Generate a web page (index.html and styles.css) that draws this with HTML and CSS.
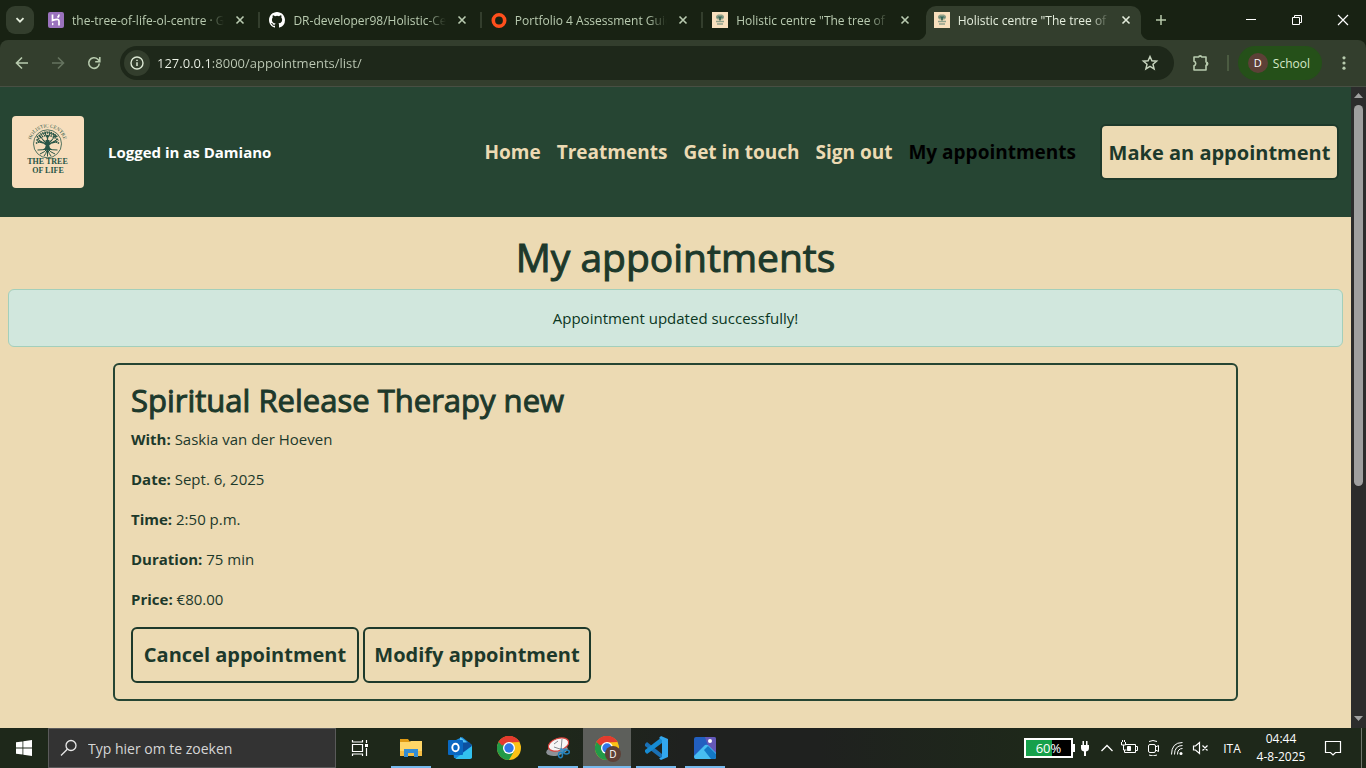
FILE: index.html
```html
<!DOCTYPE html>
<html lang="en">
<head>
<meta charset="utf-8">
<title>Holistic centre "The tree of life"</title>
<link rel="stylesheet" href="styles.css">
</head>
<body>
<svg class="defs" aria-hidden="true">
  <symbol id="x" viewBox="0 0 16 16"><path d="M4.500 4.500l7 7M11.500 4.500l-7 7" fill="none" stroke="currentColor" stroke-width="1.600"/></symbol>
  <symbol id="tree" viewBox="0 0 16 16"><rect width="16" height="16" fill="#f8dfbd"/><path d="M4 4l2-1.500h4l2 1.500v2l-1.500 1.500h-5L4 6z" fill="#8f9f86"/><path d="M6 4h4l1 2H5z" fill="#5d8070"/><path d="M7.200 5h1.600v3.500H7.200z" fill="#2d5b4b"/><path d="M4 9.500h8M5 12h6" stroke="#8fa08a" stroke-width="1.500"/></symbol>
  <symbol id="chrome" viewBox="0 0 24 24">
    <circle cx="12" cy="12" r="12" fill="#fbc116"/>
    <path d="M12 12L1.600 6A12 12 0 0 1 22.400 6H12z" fill="#e33b2e"/>
    <path d="M12 12L1.600 6A12 12 0 0 0 12 24l5.200-9z" fill="#229a48"/>
    <path d="M1.600 6L6.800 15 12 12V6z" fill="#229a48"/>
    <path d="M1.600 6L5 9.500 12 6.500 22.400 6A12 12 0 0 0 1.600 6z" fill="#e33b2e"/>
    <circle cx="12" cy="12" r="6" fill="#fff"/><circle cx="12" cy="12" r="4.700" fill="#2f76e8"/>
  </symbol>
</svg>

<div class="tabstrip">
  <button class="tab-search" aria-label="Search tabs"><svg viewBox="0 0 16 16" width="16" height="16"><path d="M4.500 6.200L8 9.700l3.500-3.500" fill="none" stroke="#e4eddc" stroke-width="1.800"/></svg></button>
  <div class="tabs">
    <div class="tab">
      <svg class="fav" viewBox="0 0 16 16"><rect width="16" height="16" rx="2" fill="#9a72bd"/><path d="M4.500 2.500V8.500Q11 6 11 9v4.500M11 2.500Q11 4.500 9.500 5.500" fill="none" stroke="#fff" stroke-width="1.700"/><path d="M4 10.500l2 1.500-2 1.500z" fill="#fff"/></svg>
      <span class="tab-title">the-tree-of-life-ol-centre · Git</span>
      <button class="tab-close" aria-label="Close"><svg><use href="#x"/></svg></button>
    </div>
    <div class="tab">
      <svg class="fav" viewBox="0 0 16 16"><path fill="#fff" d="M8 0C3.580 0 0 3.580 0 8c0 3.540 2.290 6.530 5.470 7.590.4.070.55-.17.55-.38 0-.19-.01-.82-.01-1.490-2.010.37-2.530-.49-2.690-.94-.09-.23-.48-.94-.82-1.130-.28-.15-.68-.52-.01-.53.63-.01 1.080.58 1.230.82.72 1.210 1.870.87 2.330.66.07-.52.28-.87.51-1.070-1.780-.2-3.640-.89-3.640-3.950 0-.87.31-1.590.82-2.150-.08-.2-.36-1.020.08-2.120 0 0 .67-.21 2.200.82a7.600 7.600 0 0 1 4 0c1.530-1.040 2.200-.82 2.200-.82.44 1.100.16 1.920.08 2.120.51.56.82 1.270.82 2.150 0 3.070-1.870 3.750-3.650 3.950.29.25.54.73.54 1.480 0 1.070-.01 1.930-.01 2.200 0 .21.15.46.55.38A8 8 0 0 0 16 8c0-4.420-3.580-8-8-8z"/></svg>
      <span class="tab-title">DR-developer98/Holistic-Cen</span>
      <button class="tab-close" aria-label="Close"><svg><use href="#x"/></svg></button>
    </div>
    <div class="tab">
      <svg class="fav" viewBox="0 0 16 16"><circle cx="8" cy="8.500" r="5.700" fill="none" stroke="#ff4f1c" stroke-width="3.600"/></svg>
      <span class="tab-title">Portfolio 4 Assessment Guide</span>
      <button class="tab-close" aria-label="Close"><svg><use href="#x"/></svg></button>
    </div>
    <div class="tab tab-last">
      <svg class="fav"><use href="#tree"/></svg>
      <span class="tab-title">Holistic centre "The tree of li</span>
      <button class="tab-close" aria-label="Close"><svg><use href="#x"/></svg></button>
    </div>
    <div class="tab tab-active">
      <svg class="fav"><use href="#tree"/></svg>
      <span class="tab-title">Holistic centre "The tree of li</span>
      <button class="tab-close" aria-label="Close"><svg><use href="#x"/></svg></button>
    </div>
  </div>
  <button class="new-tab" aria-label="New tab"><svg viewBox="0 0 16 16" width="16" height="16"><path d="M8 3v10M3 8h10" stroke="#b6c9aa" stroke-width="1.500"/></svg></button>
  <div class="window-controls">
    <button aria-label="Minimise"><svg viewBox="0 0 12 12" width="12" height="12"><path d="M1 5.500h10" stroke="#fff"/></svg></button>
    <button aria-label="Restore"><svg viewBox="0 0 12 12" width="12" height="12"><path d="M1.500 3.500h7v7h-7zM3.500 3.500v-2h7v7h-2" fill="none" stroke="#fff"/></svg></button>
    <button aria-label="Close"><svg viewBox="0 0 12 12" width="12" height="12"><path d="M1 1l10 10M11 1L1 11" stroke="#fff" stroke-width="1.200"/></svg></button>
  </div>
</div>

<div class="toolbar">
  <button class="tool" aria-label="Back"><svg viewBox="0 0 16 16" width="16" height="16"><path d="M14 8H3M8 2.500L2.500 8 8 13.500" fill="none" stroke="#b8cbae" stroke-width="1.600"/></svg></button>
  <button class="tool" aria-label="Forward"><svg viewBox="0 0 16 16" width="16" height="16"><path d="M2 8h11M8 2.500L13.500 8 8 13.500" fill="none" stroke="#65735f" stroke-width="1.600"/></svg></button>
  <button class="tool" aria-label="Reload"><svg viewBox="0 0 16 16" width="16" height="16"><path d="M13.300 8.500A5.300 5.300 0 1 1 11.800 4.300l1.500 1.700" fill="none" stroke="#b8cbae" stroke-width="1.600"/><path d="M13.800 2v4.700H9.200" fill="none" stroke="#b8cbae" stroke-width="1.600"/></svg></button>
  <div class="omnibox">
    <button class="site-info" aria-label="Site information"><svg viewBox="0 0 16 16" width="16" height="16"><circle cx="8" cy="8" r="6" fill="none" stroke="#dce8d4" stroke-width="1.400"/><path d="M8 7.200v3.800M8 4.700v1.400" stroke="#dce8d4" stroke-width="1.500"/></svg></button>
    <input class="url" aria-label="Address" value="127.0.0.1:8000/appointments/list/">
    <button class="star" aria-label="Bookmark"><svg viewBox="0 0 18 18" width="18" height="18"><path d="M9 2.500l1.900 4.300 4.700.4-3.600 3.100 1.100 4.600L9 12.400l-4.100 2.500L6 10.300 2.400 7.200l4.700-.4z" fill="none" stroke="#c6d3bd" stroke-width="1.500"/></svg></button>
  </div>
  <button class="extensions" aria-label="Extensions"><svg viewBox="0 0 20 20" width="20" height="20"><path d="M3 4h4.600a1.700 1.700 0 0 1 3.200 0H15v5a1.700 1.700 0 0 1 0 3.400V17H3v-4.200a2.400 2.400 0 0 0 0-4.600z" fill="none" stroke="#b8cbae" stroke-width="1.600" stroke-linejoin="round"/><path d="M7.800 4a1.500 1.500 0 0 1 2.800 0zM15 9.200a1.500 1.500 0 0 1 0 3z" fill="#b8cbae"/></svg></button>
  <span class="tool-rule"></span>
  <button class="profile"><span class="avatar">D</span>School</button>
  <button class="menu" aria-label="Menu"><svg viewBox="0 0 16 16" width="16" height="16" fill="#b8cbae"><circle cx="8" cy="2.800" r="1.600"/><circle cx="8" cy="8" r="1.600"/><circle cx="8" cy="13.200" r="1.600"/></svg></button>
</div>

<div class="viewport">
  <div class="page">
    <header class="site-header">
      <a class="logo" href="#" aria-label="The tree of life">
        <svg viewBox="0 0 72 72" width="72" height="72">
          <rect width="72" height="72" rx="4" fill="#f7debd"/>
          <path id="arc" d="M18.500 28.500a17 17 0 0 1 34 0" fill="none"/>
          <g fill="#285546" font-family="Liberation Serif, serif" font-weight="700" text-anchor="middle">
            <text font-size="5" font-weight="400"><textPath href="#arc" startOffset="50%">HOLISTIC CENTRE</textPath></text>
            <text x="35.500" y="48" font-size="8">THE TREE</text>
            <text x="36" y="57" font-size="8">OF LIFE</text>
          </g>
          <g fill="none" stroke="#285546">
            <circle cx="35.500" cy="27.800" r="14" stroke-width="0.800"/>
            <path d="M34.500 32q.8-5-3.500-8M36.500 32q-.8-5 3.500-8M35.500 32V19M34.500 29q-4-4-9-3M36.500 29q4-4 9-3" stroke-width="1.300"/>
            <path d="M35.500 22l-3-5M35.500 22l3-5M31 24l-3.500-5M40 24l3.500-5M30 26l-5-3M41 26l5-3" stroke-width="1"/>
            <path d="M25 21.500q10.500-11 21 0M27 20.500q8.500-7 17 0M24.500 24.500q11-10 22 0" stroke-width="1.700" stroke-dasharray="1.300 .9"/>
            <path d="M24 27.500q4-3 7 0M47 27.500q-4-3-7 0" stroke-width="1.500" stroke-dasharray="1.200 .8"/>
            <path d="M35.500 33q-5 1-10 1M35.500 33q5 1 10 1M35 33q-2 3-7 5M36 33q2 3 7 5M35.500 33v7.500M35 34q-1 4-3 6M36 34q1 4 3 6" stroke-width="1"/>
          </g>
          <path d="M33.500 24h4q-1 5 .5 8l3 2H30l3-2q1.500-3 .5-8z" fill="#285546"/>
        </svg>
      </a>
      <p class="user">Logged in as Damiano</p>
      <nav class="nav">
        <a href="#">Home</a>
        <a href="#">Treatments</a>
        <a href="#">Get in touch</a>
        <a href="#">Sign out</a>
        <a class="current" href="#">My appointments</a>
      </nav>
      <button class="btn btn-book">Make an appointment</button>
    </header>
    <main class="content">
      <h1>My appointments</h1>
      <div class="alert" role="alert">Appointment updated successfully!</div>
      <section class="card">
        <h2>Spiritual Release Therapy new</h2>
        <p><strong>With:</strong> Saskia van der Hoeven</p>
        <p><strong>Date:</strong> Sept. 6, 2025</p>
        <p><strong>Time:</strong> 2:50 p.m.</p>
        <p><strong>Duration:</strong> 75 min</p>
        <p><strong>Price:</strong> €80.00</p>
        <div class="actions">
          <button class="btn">Cancel appointment</button>
          <button class="btn">Modify appointment</button>
        </div>
      </section>
    </main>
  </div>
  <div class="scrollbar">
    <svg viewBox="0 0 15 17" width="15" height="17"><path d="M3 11l4.500-5 4.500 5z" fill="#a0a0a0"/></svg>
    <div class="track"><div class="thumb"></div></div>
    <svg viewBox="0 0 15 17" width="15" height="17"><path d="M3 5l4.500 5L12 5z" fill="#a0a0a0"/></svg>
  </div>
</div>

<div class="taskbar">
  <button class="task" aria-label="Start"><svg viewBox="0 0 16 16" width="16" height="16" fill="#fff"><path d="M0 2.300l6.500-.9v6.200H0zM7.300 1.300L16 0v7.600H7.300zM0 8.400h6.500v6.200L0 13.700zM7.300 8.400H16V16l-8.700-1.300z"/></svg></button>
  <div class="search">
    <svg viewBox="0 0 18 18" width="18" height="18"><circle cx="11" cy="6.500" r="5" fill="none" stroke="#e8e8e8" stroke-width="1.300"/><path d="M7.300 10.200L1 16.500" stroke="#e8e8e8" stroke-width="1.300"/></svg>
    <input aria-label="Search" placeholder="Typ hier om te zoeken">
  </div>
  <button class="task" aria-label="Task view"><svg viewBox="0 0 18 18" width="18" height="18" fill="none" stroke="#fff" stroke-width="1.200"><path d="M1.500 5.500h10v7h-10zM1.500 1v2h10V1M1.500 17v-2h10v2M15.500 1v3M15.500 9v8"/><path d="M14 5h3v3h-3z" fill="#fff" stroke="none"/></svg></button>
  <div class="apps">
    <button class="task open" aria-label="Explorer"><svg viewBox="0 0 24 24" width="24" height="24"><path d="M1 3h8l2 3H1z" fill="#e09b14"/><path d="M1 6h9l2-1h11v15H1z" fill="#ffd667"/><path d="M1 15h22v5H1z" fill="#f5bd43"/><path d="M5 21v-8h14v8h-4v-4H9v4z" fill="#348dd4"/></svg></button>
    <button class="task" aria-label="Outlook"><svg viewBox="0 0 24 24" width="24" height="24"><path d="M4 6l10-5 10 8v13H6z" fill="#1689dc"/><path d="M12 1l12 9-4-2-8-3z" fill="#58c4f5"/><path d="M13 7l8-1 3 4-10 7z" fill="#0c4f9f"/><path d="M24 10v11q0 2-2 2H7z" fill="#32c1ef"/><rect y="4" width="15" height="15" rx="1" fill="#0968c2"/><ellipse cx="7.500" cy="11.500" rx="3.200" ry="3.800" fill="none" stroke="#fff" stroke-width="1.900"/></svg></button>
    <button class="task" aria-label="Chrome"><svg width="24" height="24"><use href="#chrome"/></svg></button>
    <button class="task open" aria-label="Snipping tool"><svg viewBox="0 0 24 24" width="24" height="24"><ellipse cx="11" cy="14.500" rx="11" ry="5" transform="rotate(-12 11 14.500)" fill="#8d9297"/><ellipse cx="12.500" cy="8.500" rx="10.500" ry="6" transform="rotate(-18 12.500 8.500)" fill="#f6f6f6" stroke="#d9433d" stroke-width="1.200"/><path d="M16 3l-1 11M8 11l9 3M8 8l4-3" stroke="#858b90" fill="none"/><path d="M14 14l6-1M15 12l2 5" stroke="#3b91c9" stroke-width="1.500"/><ellipse cx="14.500" cy="19" rx="2" ry="2.700" fill="none" stroke="#2382bd" stroke-width="1.500"/><ellipse cx="20.500" cy="16" rx="2.800" ry="2" fill="none" stroke="#2382bd" stroke-width="1.500"/></svg></button>
    <button class="task open focused" aria-label="Chrome, School"><svg width="24" height="24"><use href="#chrome"/></svg><span class="badge">D</span></button>
    <button class="task open" aria-label="Visual Studio Code"><svg viewBox="0 0 24 24" width="24" height="24"><path d="M1 8l2-2 15 12v5L1 10z" fill="#1a70b5"/><path d="M1 16l2 2L18 7V1L1 14z" fill="#168bd2"/><path d="M17 0l7 3v18l-7 3-2-1.500 3-1.500V4l-3-2z" fill="#32a7ee"/></svg></button>
    <button class="task open" aria-label="Photos"><svg viewBox="0 0 24 24" width="24" height="24"><rect x="1" y="1" width="22" height="22" rx="2" fill="#225fc0"/><path d="M12 1h9q2 0 2 2v14l-8-7z" fill="#6558b8"/><path d="M1 20L12 9q2-1 4 1l7 7v4q0 2-2 2H3q-2 0-2-3z" fill="#47bdf1"/><path d="M11 14l4-4 8 8v3q0 2-2 2h-3z" fill="#1378c6"/><circle cx="17" cy="5" r="2" fill="#fff"/></svg></button>
  </div>
  <div class="tray">
    <span class="battery">60%</span>
    <svg viewBox="0 0 24 16"><path d="M8 5h8v3q0 3-3 3.500V16h-2v-4.500Q8 11 8 8zM9.500 1h1.500v5H9.500zM13 1h1.500v5H13z" fill="#fff"/></svg>
    <button class="chevron" aria-label="Show hidden icons"><svg viewBox="0 0 20 16" width="20" height="16"><path d="M4.500 11L10 5.500l5.500 5.500" fill="none" stroke="#fff" stroke-width="1.300"/></svg></button>
    <svg viewBox="0 0 24 16" fill="none" stroke="#fff"><path d="M9 4.500h9.500v8H7.500V10M18.500 6.500h2v4h-2M4.500 2v3h4V2M5.500 0v2M7.500 0v2M6.500 5v5h3"/><path d="M10.500 6.500h3v4h-3z" fill="#fff"/></svg>
    <svg viewBox="0 0 24 16" fill="none" stroke="#fff"><rect x="7.500" y="4.500" width="7" height="8" rx="1.500"/><path d="M14.500 7l3-1.500v6l-3-1.500M8 1.500q4-2 8 0M8 15q4 2 8 0"/></svg>
    <svg viewBox="0 0 24 16" fill="none" stroke="#fff"><path d="M6.500 14.500q0-12 11-12M9.500 14.500q0-9 8-9M12.500 14.500q0-6 5-6" /><circle cx="16" cy="13.500" r="1.500" fill="#fff" stroke="none"/></svg>
    <svg viewBox="0 0 24 16" fill="none" stroke="#fff"><path d="M4.500 6h2L10.500 2.500v11L6.500 10h-2zM13.500 5.500l5 5M18.500 5.500l-5 5" stroke-width="1.200"/></svg>
    <button class="lang">ITA</button>
    <button class="clock"><span>04:44</span><span>4-8-2025</span></button>
    <button class="notify" aria-label="Notifications"><svg viewBox="0 0 18 18" width="18" height="18"><path d="M1.500 2.500h15v11h-5L9 16l-2.500-2.500h-5z" fill="none" stroke="#fff" stroke-width="1.200"/></svg></button>
    <span class="show-desktop"></span>
  </div>
</div>
</body>
</html>
```
FILE: styles.css
```css
* { box-sizing: border-box; }
body {
  margin: 0;
  height: 100vh;
  display: flex;
  flex-direction: column;
  overflow: hidden;
  background: #182213;
  font-family: "Open Sans", "Noto Sans", sans-serif;
  font-size: 15px;
}
button {
  border: 0;
  padding: 0;
  background: none;
  color: inherit;
  font: inherit;
  display: flex;
  align-items: center;
  justify-content: center;
}
input { border: 0; outline: 0; padding: 0; min-width: 0; background: none; font: inherit; }
.defs { position: absolute; width: 0; height: 0; }

/* Tab strip */
.tabstrip {
  display: flex;
  align-items: stretch;
  height: 40px;
  padding-left: 6px;
  background: #182213;
  color: #b9cbb0;
}
.tab-search { align-self: center; width: 28px; height: 28px; margin-right: 6px; border-radius: 9px; background: #333e2d; }
.tabs { display: flex; flex: 0 1 1107px; min-width: 0; }
.tab {
  position: relative;
  flex: 1 1 0;
  min-width: 0;
  display: flex;
  align-items: center;
  gap: 8px;
  padding: 0 13px 0 8px;
  font-size: 12px;
}
.tab::after { content: ""; position: absolute; right: 1px; top: 12px; width: 2px; height: 16px; background: #333e2d; }
.tab-last::after { display: none; }
.fav { flex: none; width: 16px; height: 16px; }
.tab-title {
  flex: 1;
  overflow: hidden;
  white-space: nowrap;
  mask-image: linear-gradient(to right, #000 calc(100% - 20px), transparent);
}
.tab-close { width: 16px; height: 16px; }
.tab-close svg { width: 16px; height: 16px; }
.tab-active { color: #e4eddc; z-index: 0; }
.tab-active::before {
  content: "";
  position: absolute;
  z-index: -1;
  inset: 6px 6px 0 0;
  border-radius: 10px 10px 0 0;
  background: #333e2d;
}
.tab-active::after {
  left: -10px;
  right: -4px;
  top: 30px;
  width: auto;
  height: 10px;
  z-index: -1;
  background:
    radial-gradient(circle at 0 0, transparent 10px, #333e2d 11px) left / 10px 10px no-repeat,
    radial-gradient(circle at 100% 0, transparent 10px, #333e2d 11px) right / 10px 10px no-repeat;
}
.new-tab { width: 28px; }
.window-controls { display: flex; margin-left: auto; }
.window-controls button { width: 46px; }

/* Toolbar */
.toolbar {
  display: flex;
  align-items: center;
  height: 47px;
  padding: 0 14px 0 4px;
  border-bottom: 1px solid #484f43;
  border-radius: 8px 8px 0 0;
  background: #333e2d;
  color: #dce8d4;
}
.tool { width: 36px; height: 34px; }
.omnibox {
  flex: 1;
  display: flex;
  align-items: center;
  height: 34px;
  margin: 0 16px 0 8px;
  padding: 0 15px 0 4px;
  border-radius: 17px;
  background: #1e281a;
}
.site-info { width: 26px; height: 26px; margin-right: 7px; border-radius: 13px; background: #333e2d; }
.url {
  flex: 1;
  height: 24px;
  font-size: 13px;
  color: transparent;
  background: linear-gradient(to right, #eff5e9 54px, #c0ccb8 54px);
  background-clip: text;
}
.extensions { width: 22px; }
.tool-rule { width: 2px; height: 16px; margin: 0 9px 0 15px; background: #4b5b41; }
.profile { height: 34px; padding: 0 12px 0 10px; gap: 5px; border-radius: 17px; background: #255019; font-size: 12px; color: #d5e8c8; }
.avatar { width: 20px; height: 20px; border-radius: 50%; background: #5d4037; color: #fff; font-size: 11px; line-height: 20px; }
.menu { width: 16px; margin-left: 14px; }

/* Web page */
.viewport { flex: 1; min-height: 0; display: flex; background: #ecdab3; }
.page { flex: 1; min-width: 0; overflow: hidden; color: #1d392b; }
.site-header {
  display: flex;
  align-items: center;
  min-height: 130px;
  padding: 0 12px;
  background: #264533;
}
.logo { display: flex; }
.user { margin: 0 auto 0 24px; color: #fff; font-size: 15px; font-weight: 700; }
.nav { display: flex; gap: 16px; margin-right: 24px; }
.nav a { color: #ecdab3; font-size: 19px; font-weight: 700; text-decoration: none; white-space: nowrap; }
.nav .current { color: #000; }
.btn {
  min-width: 228px;
  height: 56px;
  border: 2px solid #1d392b;
  border-radius: 6px;
  font-size: 20px;
  font-weight: 700;
  white-space: nowrap;
}
.btn-book { min-width: 239px; background: #ecdab3; }
.content { padding: 16px 8px; line-height: 24px; }
h1, h2 { margin: 0 0 8px; font-weight: 500; -webkit-text-stroke: 1px currentColor; }
h1 { text-align: center; font-size: 39px; line-height: 48px; }
h2 { font-size: 31px; line-height: 38px; }
.alert {
  margin-bottom: 16px;
  padding: 16px;
  border: 1px solid #a3cfbb;
  border-radius: 6px;
  background: #d1e7dd;
  color: #0a3622;
  text-align: center;
}
.card {
  max-width: 1125px;
  margin: 0 auto;
  padding: 16px;
  border: 2px solid #264533;
  border-radius: 6px;
}
.card p { margin: 0 0 16px; }
.actions { display: flex; gap: 4px; }
.scrollbar { flex: none; width: 15px; display: flex; flex-direction: column; background: #2c2c2c; }
.track { flex: 1; padding: 1px 3px; }
.thumb { height: 63%; border-radius: 5px; background: #9f9f9f; }

/* Taskbar */
.taskbar { flex: none; display: flex; height: 40px; background: linear-gradient(to right, #1e281a 0 40%, #1f211f 50% 60%, #1e281a 75%); color: #fff; }
.task { position: relative; width: 48px; height: 40px; }
.search { display: flex; align-items: center; gap: 10px; width: 288px; padding: 0 11px; border: 1px solid #5a5a5a; background: #333; }
.search input { flex: 1; color: #fff; font-size: 14px; }
.search input::placeholder { color: #d6d6d6; opacity: 1; }
.apps { display: flex; gap: 1px; margin-left: 3px; }
.open::after { content: ""; position: absolute; left: 4px; right: 4px; bottom: 0; height: 2px; background: #76b9ed; }
.focused { background: #5d5f5b; }
.focused::after { left: 0; right: 0; }
.badge { position: absolute; left: 22px; top: 18px; width: 16px; height: 16px; border-radius: 50%; background: #5d4037; font-size: 10px; line-height: 16px; text-align: center; }
.tray { display: flex; align-items: center; margin-left: auto; font-size: 12px; }
.tray > svg { width: 24px; height: 16px; }
.chevron { width: 20px; }
.battery {
  position: relative;
  width: 49px;
  height: 20px;
  border: 2px solid #fff;
  background: linear-gradient(to right, #16a04b 58%, #000 58%);
  font-size: 13px;
  line-height: 16px;
  text-align: center;
}
.battery::after { content: ""; position: absolute; right: -4px; top: 4px; width: 2px; height: 8px; background: #fff; }
.lang { width: 38px; }
.clock { width: 60px; flex-direction: column; line-height: 18px; }
.notify { width: 44px; height: 40px; }
.show-desktop { width: 1px; height: 40px; margin: 0 4px 0 6px; background: #70776d; }
```
